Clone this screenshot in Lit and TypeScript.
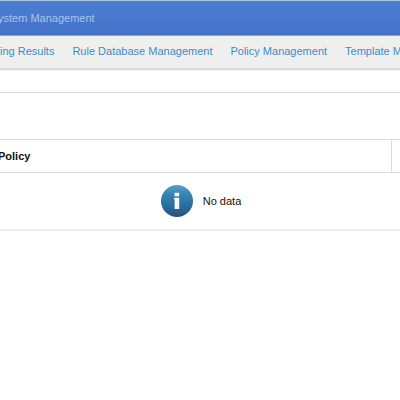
import { LitElement, html, css } from "lit";
import { customElement, property } from "lit/decorators.js";

@customElement("info-icon")
class InfoIcon extends LitElement {
  static styles = css`
    :host { display: block; width: 32px; height: 32px; flex: none; }
    svg { display: block; }
  `;
  render() {
    return html`<svg width="32" height="32" viewBox="0 0 32 32" aria-hidden="true">
      <defs>
        <linearGradient id="disc" x1="0" y1="0" x2="0" y2="1">
          <stop offset="0" stop-color="#5aa0c4" />
          <stop offset="0.3" stop-color="#3584b2" />
          <stop offset="0.65" stop-color="#2b6d9f" />
          <stop offset="1" stop-color="#284f80" />
        </linearGradient>
      </defs>
      <circle cx="16" cy="16" r="16" fill="url(#disc)" />
      <path fill="#f4f8fb" d="M13.6 7.8h4.6v3.4h-4.6zM13 12.8h5.2v11.2h-4.6v-9.6h-.6z" />
    </svg>`;
  }
}

@customElement("policy-table")
class PolicyTable extends LitElement {
  static styles = css`
    :host { display: block; }
    table { width: 100%; border-collapse: separate; border-spacing: 0; table-layout: fixed; }
    th {
      box-sizing: border-box;
      height: 34px;
      padding: 0;
      border-top: 1px solid #dcdcdc;
      border-bottom: 1px solid #dcdcdc;
      font-size: 11px;
      line-height: 16px;
      font-weight: 700;
      text-align: left;
      color: #111;
    }
    .more { width: 9px; border-left: 1px solid #dcdcdc; }
    td { padding: 0; border-bottom: 2px solid #eee; }
    .empty {
      display: flex;
      align-items: center;
      justify-content: center;
      gap: 10px;
      height: 56px;
      padding-left: 4px;
      font-size: 11px;
      line-height: 16px;
      color: #111;
    }
  `;
  render() {
    return html`<table>
      <thead>
        <tr><th scope="col">Policy</th><th class="more"></th></tr>
      </thead>
      <tbody>
        <tr><td colspan="2"><div class="empty"><info-icon></info-icon><span>No data</span></div></td></tr>
      </tbody>
    </table>`;
  }
}

@customElement("app-root")
class AppRoot extends LitElement {
  @property({ type: Array })
  links = ["ing Results", "Rule Database Management", "Policy Management", "Template M"];

  static styles = css`
    :host {
      display: block;
      min-height: 100vh;
      overflow-x: hidden;
      background: #fff;
      font-family: "Liberation Sans", Arial, sans-serif;
      font-size: 11px;
      line-height: 16px;
    }
    a { text-decoration: none; white-space: nowrap; }
    .page { margin-left: -2px; }
    .top {
      box-sizing: border-box;
      display: flex;
      align-items: center;
      height: 36px;
      border-top: 1px solid #b4c6dc;
      border-bottom: 1px solid #809fd2;
      background: linear-gradient(#4b7fd2, #4472c8);
    }
    .top a { color: #a9c4ee; }
    .nav {
      box-sizing: border-box;
      display: flex;
      align-items: center;
      gap: 18px;
      height: 34px;
      padding: 0 0 2px 2px;
      overflow: hidden;
      background: #efefef;
      border-bottom: 2px solid #dcdcdc;
    }
    .nav a { color: #3b8ccb; }
    .strip {
      box-sizing: border-box;
      height: 23px;
      border-top: 1px solid #f4f4f4;
      border-bottom: 1px solid #dcdcdc;
    }
    .content { padding-top: 46px; }
  `;
  render() {
    return html`
      <div class="page">
        <header class="top"><a href="#">ystem Management</a></header>
        <nav class="nav">${this.links.map((label) => html`<a href="#">${label}</a>`)}</nav>
        <div class="strip"></div>
        <main class="content"><policy-table></policy-table></main>
      </div>
    `;
  }
}
